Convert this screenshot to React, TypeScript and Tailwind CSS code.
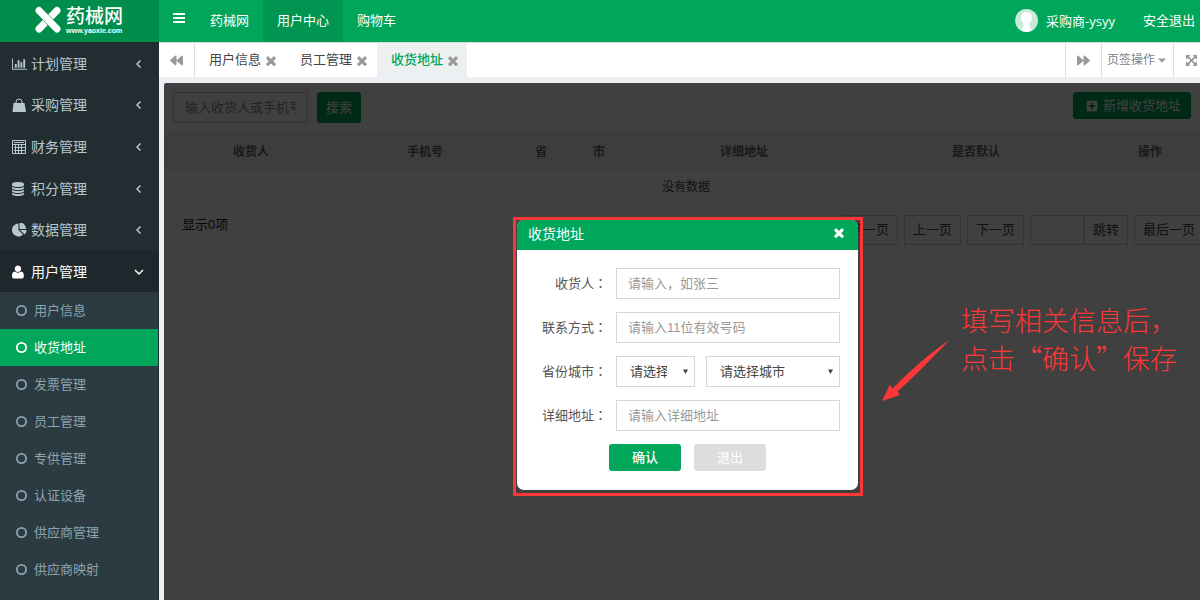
import { FaBackward, FaCaretDown, FaForward, FaPlusSquare } from "react-icons/fa";

type IconProps = { className?: string };

const BarChartIcon = ({ className }: IconProps) => (
    <svg viewBox="0 0 2048 1792" className={className} fill="currentColor">
        <path d="M640 896v512h-256v-512h256zm384-512v1024h-256v-1024h256zm1024 1152v128h-2048v-1536h128v1408h1920zm-640-896v768h-256v-768h256zm384-384v1152h-256v-1152h256z" />
    </svg>
);

const BagIcon = ({ className }: IconProps) => (
    <svg viewBox="0 0 15 14" className={className} fill="currentColor">
        <path d="M1.500 5h11L14 14H0.500z" />
        <path d="M4 7V4a3 3 0 0 1 6 0v3" fill="none" stroke="currentColor" />
    </svg>
);

const CalculatorIcon = ({ className }: IconProps) => (
    <svg viewBox="0 0 14 14" className={className} preserveAspectRatio="xMinYMid" fill="none" stroke="currentColor">
        <path d="M0.500 0.500h13v13h-13zM2 2.500h10M1 4.500h12M2 7.500h11M2 10.500h11M3.500 5v8M6.500 5v8M9.500 5v8" />
    </svg>
);

const DatabaseIcon = ({ className }: IconProps) => (
    <svg viewBox="128 0 1536 1792" className={className} preserveAspectRatio="xMinYMid" fill="currentColor">
        <path d="M896 768q237 0 443-43t325-127v170q0 69-103 128t-280 93.500-385 34.500-385-34.500-280-93.500-103-128v-170q119 84 325 127t443 43zm0 768q237 0 443-43t325-127v170q0 69-103 128t-280 93.500-385 34.500-385-34.500-280-93.500-103-128v-170q119 84 325 127t443 43zm0-384q237 0 443-43t325-127v170q0 69-103 128t-280 93.500-385 34.500-385-34.500-280-93.500-103-128v-170q119 84 325 127t443 43zm0-1152q208 0 385 34.500t280 93.500 103 128v128q0 69-103 128t-280 93.500-385 34.500-385-34.500-280-93.500-103-128v-128q0-69 103-128t280-93.500 385-34.500z" />
    </svg>
);

const PieChartIcon = ({ className }: IconProps) => (
    <svg viewBox="0 64 1728 1664" className={className} preserveAspectRatio="xMinYMid" fill="currentColor">
        <path d="M768 890l546 546q-106 108-247.500 168t-298.500 60q-209 0-385.500-103t-279.500-279.500-103-385.500 103-385.500 279.500-279.500 385.500-103v762zm187 6h773q0 157-60 298.500t-168 247.500zm709-128h-768v-768q209 0 385.500 103t279.500 279.500 103 385.500z" />
    </svg>
);

const UserIcon = ({ className }: IconProps) => (
    <svg viewBox="192 64 1408 1664" className={className} preserveAspectRatio="xMinYMid" fill="currentColor">
        <path d="M1600 1405q0 120-73 189.500t-194 69.500h-874q-121 0-194-69.500t-73-189.500q0-53 3.500-103.500t14-109 26.500-108.500 43-97.500 62-81 85.500-53.500 111.500-20q9 0 42 21.500t74.500 48 108 48 133.500 21.500 133.500-21.500 108-48 74.500-48 42-21.500q61 0 111.500 20t85.500 53.500 62 81 43 97.500 26.500 108.500 14 109 3.500 103.500zm-320-893q0 159-112.500 271.500t-271.500 112.500-271.500-112.500-112.500-271.500 112.500-271.500 271.500-112.500 271.500 112.500 112.500 271.500z" />
    </svg>
);

const TimesIcon = ({ className }: IconProps) => (
    <svg viewBox="280 320 1232 1232" className={className} fill="currentColor">
        <path d="M1490 1322q0 40-28 68l-136 136q-28 28-68 28t-68-28l-294-294-294 294q-28 28-68 28t-68-28l-136-136q-28-28-28-68t28-68l294-294-294-294q-28-28-28-68t28-68l136-136q28-28 68-28t68 28l294 294 294-294q28-28 68-28t68 28l136 136q28 28 28 68t-28 68l-294 294 294 294q28 28 28 68z" />
    </svg>
);

const ExpandIcon = ({ className }: IconProps) => (
    <svg viewBox="128 128 1536 1536" className={className} fill="currentColor">
        <path d="M1411 541l-355 355 355 355 144-144q29-31 70-14 39 17 39 59v448q0 26-19 45t-45 19h-448q-42 0-59-40-17-39 14-69l144-144-355-355-355 355 144 144q31 30 14 69-17 40-59 40h-448q-26 0-45-19t-19-45v-448q0-42 40-59 39-17 69 14l144 144 355-355-355-355-144 144q-19 19-45 19-12 0-24-5-40-17-40-59v-448q0-26 19-45t45-19h448q42 0 59 40 17 39-14 69l-144 144 355 355 355-355-144-144q-31-30-14-69 17-40 59-40h448q26 0 45 19t19 45v448q0 42-39 59-13 5-25 5-26 0-45-19z" />
    </svg>
);

const BarsIcon = ({ className }: IconProps) => (
    <svg viewBox="0 0 12 10" className={className} fill="currentColor">
        <path d="M0 0h12v2H0zM0 4h12v2H0zM0 8h12v2H0z" />
    </svg>
);

const Chevron = ({ open }: { open?: boolean }) => (
    <svg viewBox="0 0 10 10" className="mr-[15px] ml-auto size-[10px]" fill="none" stroke="currentColor" strokeWidth="1.500">
        <path d={open ? "M1 3l4 4 4-4" : "M6.500 1.500L3 5 6.500 8.500"} />
    </svg>
);

const LogoMark = () => (
    <svg viewBox="0 0 26 27" className="h-[27px] w-[26px]" fill="none" stroke="#fff" strokeLinecap="round">
        <path d="M22 4.500L4 23" strokeWidth="7" />
        <path d="M4 4.500L22 23" stroke="#008d4c" strokeWidth="8" strokeLinecap="butt" />
        <path d="M4 4.500L22 23" strokeWidth="7" />
    </svg>
);

const Avatar = () => (
    <svg viewBox="0 0 23 23" className="size-[23px]">
        <circle cx="11.500" cy="11.500" r="11.500" fill="#c8ead9" />
        <path
            d="M11.500 3c3.600 0 5.500 2.400 5.500 5.600 0 2.600-1 4.600-2.400 6v2c0 1.500 1.400 3 2.600 4.200A11.500 11.500 0 0 1 11.500 23a11.500 11.500 0 0 1-5.700-2.200c1.200-1.200 2.600-2.700 2.600-4.200v-2C7 13.200 6 11.200 6 8.600 6 5.400 7.900 3 11.500 3z"
            fill="#fff"
        />
    </svg>
);

const menus = [
    { label: "计划管理", Icon: BarChartIcon },
    { label: "采购管理", Icon: BagIcon },
    { label: "财务管理", Icon: CalculatorIcon },
    { label: "积分管理", Icon: DatabaseIcon },
    { label: "数据管理", Icon: PieChartIcon },
    { label: "用户管理", Icon: UserIcon, open: true },
];

const subMenus = ["用户信息", "收货地址", "发票管理", "员工管理", "专供管理", "认证设备", "供应商管理", "供应商映射"];

const topLinks = ["药械网", "用户中心", "购物车"];

const tabs = ["用户信息", "员工管理", "收货地址"];

const columns = [
    { title: "收货人", width: "w-[174px]" },
    { title: "手机号", width: "w-[174px]" },
    { title: "省", width: "w-[58px]" },
    { title: "市", width: "w-[58px]" },
    { title: "详细地址", width: "" },
    { title: "是否默认", width: "" },
    { title: "操作", width: "w-[116px]" },
];

const Header = () => (
    <header className="flex h-[42px] bg-[#00a65a] text-white">
        <a href="#" className="flex w-[159px] items-center gap-[5px] bg-[#008d4c] pb-[3px] pl-[35px]">
            <LogoMark />
            <span className="flex flex-col pt-[2px]">
                <span className="text-[19px] leading-[19px] font-medium">药械网</span>
                <span className="font-['Liberation_Sans'] text-[7px] leading-[9px] font-bold">www.yaoxie.com</span>
            </span>
        </a>
        <button className="flex w-[37px] items-center justify-center pb-[6px] pl-[3px]" aria-label="菜单">
            <BarsIcon className="h-[10px] w-[12px]" />
        </button>
        <nav className="flex">
            {topLinks.map((link) => (
                <a
                    key={link}
                    href="#"
                    className={`flex items-center px-[14px] pb-px ${link === "用户中心" ? "bg-[#009551]" : ""}`}
                >
                    {link}
                </a>
            ))}
        </nav>
        <div className="ml-auto flex items-center gap-[28px] pr-[13px] pb-px">
            <a href="#" className="flex items-center gap-2 font-['Open_Sans','Noto_Sans_CJK_SC',sans-serif]">
                <Avatar />
                采购商-ysyy
            </a>
            <a href="#">安全退出</a>
        </div>
    </header>
);

const Sidebar = () => (
    <aside className="flex w-[159px] shrink-0 flex-col bg-[#222d32]">
        <ul className="grid h-[250px] grid-rows-6 text-[14px] text-[#b8c7ce]">
            {menus.map(({ label, Icon, open }) => (
                <li key={label} className={open ? "bg-[#1e282c] text-white" : ""}>
                    <a href="#" className="flex h-full items-center gap-1 pt-[2px] pl-3">
                        <Icon className="h-[14px] w-[15px]" />
                        {label}
                        <Chevron open={open} />
                    </a>
                </li>
            ))}
        </ul>
        <ul className="mr-px grow bg-[#2c3b41] text-[#8aa4af]">
            {subMenus.map((label) => (
                <li key={label}>
                    <a
                        href="#"
                        className={`flex h-[37px] items-center gap-[6px] pl-4 ${label === "收货地址" ? "bg-[#00a65a] text-white" : ""}`}
                    >
                        <svg viewBox="0 0 12 12" className="size-[12px]" fill="none" stroke="currentColor" strokeWidth="1.800">
                            <circle cx="5.500" cy="5.500" r="4.600" />
                        </svg>
                        {label}
                    </a>
                </li>
            ))}
        </ul>
    </aside>
);

const TabBar = () => (
    <div className="flex h-[35px] border-t border-[#ddd] bg-white text-[#999]">
        <button className="flex w-9 items-center justify-center border-r border-[#ddd]" aria-label="向左">
            <FaBackward className="size-[13px]" />
        </button>
        <div className="flex grow gap-px">
            {tabs.map((tab) => {
                const active = tab === "收货地址";
                return (
                    <div key={tab} className={`flex w-[90px] items-center gap-[5px] pl-[14px] ${active ? "bg-[#ecf0f1]" : ""}`}>
                        <a href="#" className={active ? "font-medium text-[#00a65a]" : "text-[#444]"}>
                            {tab}
                        </a>
                        <button className="pt-px" aria-label={`关闭${tab}`}>
                            <TimesIcon className="size-[10px]" />
                        </button>
                    </div>
                );
            })}
        </div>
        <button className="flex w-[37px] items-center justify-center border-x border-[#ddd]" aria-label="向右">
            <FaForward className="size-[13px]" />
        </button>
        <button className="flex w-[72px] items-center justify-center gap-px border-r border-[#ddd] text-[12px]">
            <span className="text-[#777f8c]">页签操作</span>
            <FaCaretDown className="size-[12px]" />
        </button>
        <button className="flex w-[34px] items-center justify-center pl-px" aria-label="全屏">
            <ExpandIcon className="size-[11px]" />
        </button>
    </div>
);

const PageButton = ({ label }: { label: string }) => (
    <button className="h-[30px] border border-[#d2d2d2] px-2">{label}</button>
);

const AddressList = () => (
    <div className="text-[#444]">
        <div className="flex items-start gap-[9px] py-[9px] pr-[17px] pl-[9px]">
            <input
                type="text"
                aria-label="搜索"
                placeholder="输入收货人或手机号码"
                className="h-[31px] w-[135px] border border-[#ccc] px-[11px] placeholder:text-[#888]"
            />
            <button className="h-[31px] rounded-[3px] bg-[#00a65a] px-[9px] text-white">搜索</button>
            <button className="ml-auto flex h-[27px] items-center gap-[5px] rounded-[3px] bg-[#00a65a] pr-[10px] pl-[13px] text-white">
                <FaPlusSquare className="size-[12px]" />
                新增收货地址
            </button>
        </div>
        <table className="w-full table-fixed text-[12px]">
            <thead>
                <tr className="h-[39px] bg-[#f4f4f4] text-[#666]">
                    {columns.map((col) => (
                        <th key={col.title} className={`font-bold ${col.width}`}>
                            {col.title}
                        </th>
                    ))}
                </tr>
            </thead>
            <tbody>
                <tr className="h-8 border-b border-[#eee]">
                    <td colSpan={7} className="text-center">没有数据</td>
                </tr>
            </tbody>
        </table>
        <div className="flex justify-between border-b border-[#f0f0f0] pt-[11px] pr-[4px] pb-[33px] pl-[18px]">
            <span className="text-[#222]">显示0项</span>
            <div className="flex gap-[6px]">
                <PageButton label="第一页" />
                <PageButton label="上一页" />
                <PageButton label="下一页" />
                <div className="flex">
                    <input type="text" aria-label="页码" className="h-[30px] w-[54px] border border-[#d2d2d2]" />
                    <PageButton label="跳转" />
                </div>
                <PageButton label="最后一页" />
            </div>
        </div>
    </div>
);

// the TC face centres the full-width colon in its box
const FieldLabel = ({ id, label }: { id: string; label: string }) => (
    <label htmlFor={id} className="w-[90px] text-right">
        {label}
        <span lang="zh-TW" className="font-['Noto_Sans_CJK_TC',sans-serif]">：</span>
    </label>
);

const Field = ({ id, label, placeholder }: { id: string; label: string; placeholder: string }) => (
    <div className="flex items-center gap-[9px]">
        <FieldLabel id={id} label={label} />
        <input
            id={id}
            type="text"
            placeholder={placeholder}
            className="h-[31px] grow border border-[#d2d6de] px-[11px] placeholder:text-[#999]"
        />
    </div>
);

const Select = ({ id, label, option, className }: { id: string; label: string; option: string; className: string }) => (
    <div className={`relative ${className}`}>
        <select
            id={id}
            aria-label={label}
            className="h-[31px] w-full appearance-none border border-[#d2d6de] bg-white pr-[27px] pl-[13px] text-[#444]"
        >
            <option>{option}</option>
        </select>
        <svg viewBox="0 0 6 6" className="pointer-events-none absolute top-[13px] right-[7px] size-[5px]" fill="#444">
            <path d="M0 0.500h6L3 6z" />
        </svg>
    </div>
);

const AddressDialog = () => (
    <div role="dialog" aria-label="收货地址" className="overflow-hidden rounded-[7px] bg-white text-[#555]">
        <div className="flex h-[30px] items-center justify-between bg-[#00a65a] pr-[14px] pb-[2px] pl-[11px] text-white">
            <h2 className="text-[14px]">收货地址</h2>
            <button className="pb-[2px]" aria-label="关闭">
                <TimesIcon className="size-[10px]" />
            </button>
        </div>
        <form className="flex flex-col gap-[13px] pt-[18px] pr-[18px] pb-[19px]">
            <Field id="name" label="收货人" placeholder="请输入，如张三" />
            <Field id="phone" label="联系方式" placeholder="请输入11位有效号码" />
            <div className="flex items-center gap-[9px]">
                <FieldLabel id="province" label="省份城市" />
                <div className="flex grow gap-[11px]">
                    <Select id="province" label="省份" option="请选择省份" className="w-[79px]" />
                    <Select id="city" label="城市" option="请选择城市" className="grow" />
                </div>
            </div>
            <Field id="detail" label="详细地址" placeholder="请输入详细地址" />
            <div className="-mr-[18px] flex justify-center gap-[13px] text-white">
                <button type="button" className="h-[27px] w-[72px] rounded-[3px] bg-[#00a65a] font-medium">确认</button>
                <button type="button" className="h-[27px] w-[72px] rounded-[3px] bg-[#ddd]">退出</button>
            </div>
        </form>
    </div>
);

// quote marks need the CJK face to come out full width
const Quote = ({ mark }: { mark: string }) => (
    <span className="font-['Noto_Sans_CJK_SC',sans-serif]">{mark}</span>
);

export default function App() {
    return (
        <div className="h-screen overflow-hidden">
            <div className="flex h-full w-[calc(100%+8px)] flex-col bg-[#ecf0f5] font-['Liberation_Sans','Noto_Sans_CJK_SC',sans-serif] text-[13px] leading-[20px]">
                <Header />
                <div className="flex min-h-0 grow">
                    <Sidebar />
                    <div className="flex min-w-0 grow flex-col">
                        <TabBar />
                        <main className="relative mt-[6px] ml-[5px] grow rounded-tl-[2px] bg-white">
                            <AddressList />
                            <div className="absolute inset-0 rounded-tl-[2px] bg-black/75" />
                            <div className="absolute top-[134px] left-[349px] w-[350px] border-3 border-[#fd3737] pr-[2px] pb-[3px] pl-px">
                                <AddressDialog />
                            </div>
                            <div className="absolute top-[222px] left-[718px] flex gap-[11px] text-[#fd3737]">
                                <svg viewBox="0 0 68 64" className="mt-[33px] h-[64px] w-[68px]" fill="currentColor">
                                    <path d="M0 63L8 46.500l2.500 4C28 33 48 15 68 1.500 52 18 34 37 15.500 53.500L18 57z" />
                                </svg>
                                <div lang="zh-CN" className="text-[27px] leading-[35px] font-light whitespace-nowrap">
                                    <p>填写相关信息后，</p>
                                    <p className="h-[35px]">
                                        点击
                                        <Quote mark="“" />
                                        确认
                                        <Quote mark="”" />
                                        保存
                                    </p>
                                </div>
                            </div>
                        </main>
                    </div>
                </div>
            </div>
        </div>
    );
}
